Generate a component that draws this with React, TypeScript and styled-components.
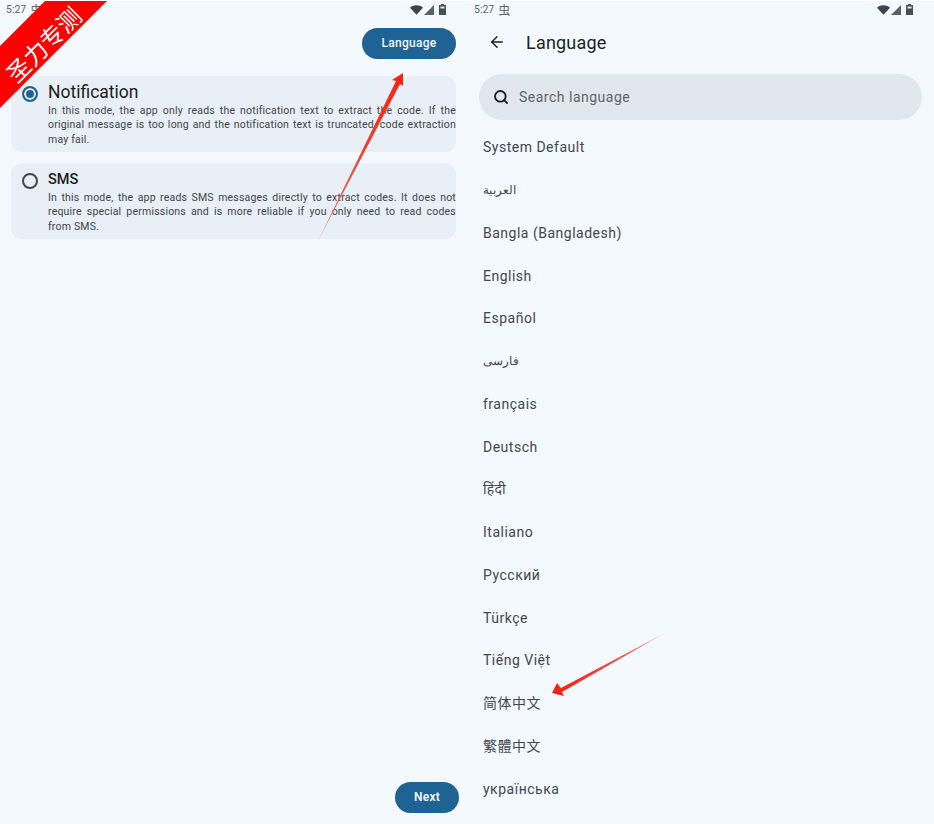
import React from "react";
import styled, { createGlobalStyle } from "styled-components";
import { ArrowLeft, Search } from "lucide-react";

const GlobalStyle = createGlobalStyle`
  html, body {
    margin: 0;
    padding: 0;
    background: #f3f9ff;
  }
  * { box-sizing: border-box; }
`;

const languages = [
  { name: "System Default" },
  { name: "العربية", small: true },
  { name: "Bangla (Bangladesh)" },
  { name: "English" },
  { name: "Español" },
  { name: "فارسی", small: true },
  { name: "français" },
  { name: "Deutsch" },
  { name: "हिंदी" },
  { name: "Italiano" },
  { name: "Русский" },
  { name: "Türkçe" },
  { name: "Tiếng Việt" },
  { name: "简体中文" },
  { name: "繁體中文" },
  { name: "українська" },
];

const modes = [
  {
    id: "notification",
    title: "Notification",
    selected: true,
    text: [
      "In this mode, the app only reads the notification text to extract the code. If the",
      "original message is too long and the notification text is truncated, code extraction",
      "may fail.",
    ],
  },
  {
    id: "sms",
    title: "SMS",
    selected: false,
    text: [
      "In this mode, the app reads SMS messages directly to extract codes. It does not",
      "require special permissions and is more reliable if you only need to read codes",
      "from SMS.",
    ],
  },
];

const StatusBar: React.FC<{ iconInset: number }> = ({ iconInset }) => (
  <StatusRow>
    <Clock>
      5:27 <BugGlyph>虫</BugGlyph>
    </Clock>
    <IconRow inset={iconInset}>
      <svg width="13" height="10" viewBox="0 0 14 10">
        <path d="M0 2.6C4-.9 10-.9 14 2.6L7 10z" fill="#3f4449" />
      </svg>
      <svg width="10" height="10" viewBox="0 0 10 10">
        <path d="M10 0v10H0z" fill="#5b6066" />
      </svg>
      <BatteryGap />
      <svg width="7" height="11" viewBox="0 0 7 11">
        <path d="M2 0h3v1h2v10H0V1h2z" fill="#4a4f55" />
        <path d="M1.5 2.5h4v2h-4z" fill="#e8edf2" />
      </svg>
    </IconRow>
  </StatusRow>
);

const App = () => (
  <Page>
    <GlobalStyle />
    <Screen>
      <StatusBar iconInset={13} />
      <TopActions>
        <PillButton>Language</PillButton>
      </TopActions>
      <ModeList>
        {modes.map((mode) => (
          <ModeCard key={mode.id}>
            <Radio selected={mode.selected} />
            <ModeBody>
              <ModeTitle large={mode.selected}>{mode.title}</ModeTitle>
              {mode.text.map((line, i) => (
                <ModeLine key={i} last={i === mode.text.length - 1}>
                  {line}
                </ModeLine>
              ))}
            </ModeBody>
          </ModeCard>
        ))}
      </ModeList>
      <BottomActions>
        <NextButton>Next</NextButton>
      </BottomActions>
    </Screen>

    <RightScreen>
      <StatusBar iconInset={9} />
      <TitleBar>
        <ArrowLeft size={18} color="#1c2025" strokeWidth={2} />
        <Title>Language</Title>
      </TitleBar>
      <SearchBox>
        <Search size={16} color="#1c2025" strokeWidth={2.8} />
        <SearchText>Search language</SearchText>
      </SearchBox>
      <LanguageList>
        {languages.map((lang) => (
          <LanguageRow key={lang.name} small={!!lang.small}>
            {lang.name}
          </LanguageRow>
        ))}
      </LanguageList>
    </RightScreen>

    <Ribbon>
      <RibbonText>圣力专测</RibbonText>
    </Ribbon>

    {/* red arrows pasted over the screenshot */}
    <ArrowLayer viewBox="0 0 934 824">
      <defs>
        <linearGradient id="arrowA" gradientUnits="userSpaceOnUse" x1="318" y1="241" x2="404" y2="72">
          <stop offset="0" stopColor="#f28d82" />
          <stop offset="0.3" stopColor="#f0513f" />
          <stop offset="1" stopColor="#f5210f" />
        </linearGradient>
        <linearGradient id="arrowB" gradientUnits="userSpaceOnUse" x1="665" y1="633" x2="552" y2="693">
          <stop offset="0" stopColor="#f2a8a2" />
          <stop offset="0.35" stopColor="#ee5044" />
          <stop offset="1" stopColor="#f5210f" />
        </linearGradient>
      </defs>
      <path d="M318 241L396 81 392 80 403 73 403 86 400 84z" fill="url(#arrowA)" />
      <path d="M665 633L561 688 557 683 552 693 564 696 562 692z" fill="url(#arrowB)" />
    </ArrowLayer>
  </Page>
);

export default App;

// Styles
const Page = styled.div`
  position: relative;
  width: 934px;
  height: 824px;
  overflow: hidden;
  display: grid;
  grid-template-columns: 467px 467px;
  background: #f3f9ff;
  border-top: 1px solid #ffffff;
  font-family: Roboto, "Noto Sans", "Noto Sans CJK SC", sans-serif;
`;

const Screen = styled.section`
  display: flex;
  flex-direction: column;
  height: 823px;
  padding: 0 8px 0 11px;
`;

const RightScreen = styled.section`
  display: flex;
  flex-direction: column;
  height: 823px;
  padding: 0 12px;
`;

const StatusRow = styled.div`
  display: flex;
  align-items: center;
  justify-content: space-between;
  height: 17px;
  color: #5f6368;
  font-size: 10.5px;
`;

const Clock = styled.span`
  display: flex;
  align-items: center;
  gap: 4px;
  margin-left: -5px;
`;

const BugGlyph = styled.span`
  font-family: "Noto Sans CJK SC", sans-serif;
  font-size: 12px;
  line-height: 12px;
`;

const IconRow = styled.div<{ inset: number }>`
  display: flex;
  align-items: center;
  gap: 1px;
  margin-right: ${({ inset }) => inset}px;
`;

const BatteryGap = styled.span`
  width: 3px;
`;

const TopActions = styled.div`
  display: flex;
  justify-content: flex-end;
  padding-top: 10px;
  padding-right: 3px;
`;

const PillButton = styled.button`
  width: 94px;
  height: 31px;
  padding: 0 0 2px;
  border: 0;
  border-radius: 16px;
  background: #1f6394;
  color: #f2f7fb;
  font-family: inherit;
  font-size: 12px;
  font-weight: 500;
  letter-spacing: 0.3px;
`;

const ModeList = styled.div`
  display: flex;
  flex-direction: column;
  gap: 11px;
  padding-top: 17px;
  padding-right: 3px;
`;

const ModeCard = styled.div`
  display: flex;
  gap: 10px;
  height: 76px;
  padding: 6px 0 0 11px;
  border-radius: 11px;
  background: #e9eff6;
`;

const Radio = styled.span<{ selected: boolean }>`
  flex: none;
  width: 16px;
  height: 16px;
  margin-top: 4px;
  border-radius: 50%;
  border: 2px solid ${({ selected }) => (selected ? "#1f6394" : "#44484e")};
  background: ${({ selected }) => (selected ? "#1f6394" : "transparent")};
  box-shadow: ${({ selected }) =>
    selected ? "inset 0 0 0 2px #e9eff6" : "none"};
`;

const ModeBody = styled.div`
  flex: 1;
  min-width: 0;
  display: flex;
  flex-direction: column;
`;

const ModeTitle = styled.div<{ large: boolean }>`
  font-size: ${({ large }) => (large ? "17.5px" : "14.5px")};
  font-weight: ${({ large }) => (large ? 400 : 500)};
  line-height: 21.5px;
  color: #191c20;
`;

const ModeLine = styled.div<{ last: boolean }>`
  font-size: 10.5px;
  line-height: 14.5px;
  color: #3f444a;
  letter-spacing: 0.2px;
  white-space: nowrap;
  text-align: justify;
  text-align-last: ${({ last }) => (last ? "left" : "justify")};
`;

const BottomActions = styled.div`
  margin-top: auto;
  display: flex;
  justify-content: flex-end;
  padding-bottom: 11px;
`;

const NextButton = styled(PillButton)`
  width: 64px;
  font-weight: 600;
`;

const TitleBar = styled.div`
  display: flex;
  align-items: center;
  gap: 20px;
  height: 34px;
  margin-top: 7px;
  padding-left: 9px;
`;

const Title = styled.h1`
  margin: 0;
  font-size: 18px;
  font-weight: 400;
  letter-spacing: 0.2px;
  color: #1b1e23;
`;

const SearchBox = styled.div`
  display: flex;
  align-items: center;
  gap: 10px;
  width: 443px;
  height: 46px;
  margin-top: 15px;
  padding-left: 14px;
  border-radius: 23px;
  background: #e1e7ef;
`;

const SearchText = styled.span`
  font-size: 14px;
  letter-spacing: 0.5px;
  color: #5f646b;
`;

const LanguageList = styled.div`
  display: flex;
  flex-direction: column;
  padding-top: 6px;
  padding-left: 4px;
`;

const LanguageRow = styled.div<{ small: boolean }>`
  height: 42.75px;
  display: flex;
  align-items: center;
  font-size: ${({ small }) => (small ? "12px" : "14px")};
  line-height: 20px;
  letter-spacing: ${({ small }) => (small ? "0" : "0.5px")};
  color: #42474e;
`;

const Ribbon = styled.div`
  position: absolute;
  top: -1px;
  left: 0;
  width: 108px;
  height: 108px;
  display: flex;
  align-items: center;
  justify-content: center;
  background: #ff0000;
  clip-path: polygon(0 46px, 46px 0, 108px 0, 0 108px);
`;

const RibbonText = styled.span`
  margin: -20px 0 0 -23px;
  color: #ffffff;
  font-size: 23.5px;
  line-height: 24px;
  white-space: nowrap;
  font-family: "Noto Sans CJK SC", sans-serif;
  transform: rotate(-45deg);
`;

const ArrowLayer = styled.svg`
  position: absolute;
  top: -1px;
  left: 0;
  width: 934px;
  height: 824px;
  pointer-events: none;
`;
